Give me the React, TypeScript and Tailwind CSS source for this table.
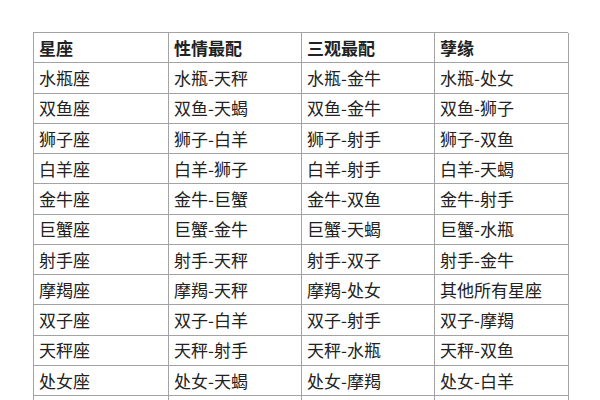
const header = ['星座', '性情最配', '三观最配', '孽缘']

const rows = [
  ['水瓶座', '水瓶-天秤', '水瓶-金牛', '水瓶-处女'],
  ['双鱼座', '双鱼-天蝎', '双鱼-金牛', '双鱼-狮子'],
  ['狮子座', '狮子-白羊', '狮子-射手', '狮子-双鱼'],
  ['白羊座', '白羊-狮子', '白羊-射手', '白羊-天蝎'],
  ['金牛座', '金牛-巨蟹', '金牛-双鱼', '金牛-射手'],
  ['巨蟹座', '巨蟹-金牛', '巨蟹-天蝎', '巨蟹-水瓶'],
  ['射手座', '射手-天秤', '射手-双子', '射手-金牛'],
  ['摩羯座', '摩羯-天秤', '摩羯-处女', '其他所有星座'],
  ['双子座', '双子-白羊', '双子-射手', '双子-摩羯'],
  ['天秤座', '天秤-射手', '天秤-水瓶', '天秤-双鱼'],
  ['处女座', '处女-天蝎', '处女-摩羯', '处女-白羊'],
  // next row starts at the bottom edge, only its lines show
  ['', '', '', ''],
]

export default function App() {
  return (
    <div
      className="h-[400px] w-[600px] overflow-hidden bg-white pt-[32px] pl-[33px]"
      style={{ fontFamily: '"Noto Sans CJK SC", "Noto Sans", sans-serif' }}
    >
      <div className="grid w-[535px] grid-cols-[135px_133px_133px_134px] border-l border-t border-[#a3a3a3] text-[17px] text-[#222]">
        {header.map((h) => (
          <div
            key={h}
            className="flex h-[30.25px] items-center border-b border-r border-[#a3a3a3] pl-[5px] font-bold"
          >
            {h}
          </div>
        ))}
        {rows.map((row, r) =>
          row.map((cell, i) => (
            <div
              key={r + '-' + i}
              className="flex h-[30.25px] items-center border-b border-r border-[#a3a3a3] pl-[5px]"
            >
              {cell}
            </div>
          ))
        )}
      </div>
    </div>
  )
}
